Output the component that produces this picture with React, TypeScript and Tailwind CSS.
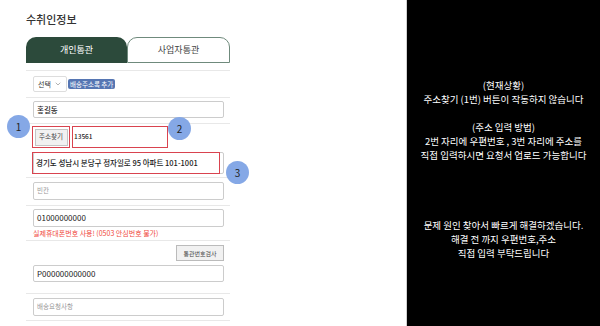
import { ChevronDown } from "lucide-react";

export default function App() {
  return (
    <div className="relative flex h-[326px] w-[600px] overflow-hidden font-['Noto_Sans_CJK_KR',sans-serif]">
      {/* LEFT FORM */}
      <div className="w-[407px] border-r border-[#d0d0d0] bg-white pl-[26px]">
        <div className="w-[204px]">
          <h2 className="h-[37px] pt-[12px] text-[11px] font-medium leading-[14px] text-[#333]">
            수취인정보
          </h2>

          {/* TABS */}
          <div className="flex h-[26px]">
            <div className="flex flex-1 items-center justify-center rounded-t-[10px] bg-[#2c4a3b] text-[9px] text-white">
              개인통관
            </div>
            <div className="flex flex-1 items-center justify-center rounded-t-[10px] border border-[#6f8a7c] bg-white text-[9px] text-[#444]">
              사업자통관
            </div>
          </div>

          <div className="h-[8px] border-b border-[#e8e8e8]" />

          {/* SELECT */}
          <div className="flex h-[27px] items-start gap-[1px] border-b border-[#e8e8e8] pl-[7px] pt-[5px]">
            <div className="flex h-[16px] w-[34px] items-center justify-center gap-[3px] rounded-[2px] border border-[#ddd] text-[7px] text-[#333]">
              선택
              <ChevronDown size={8} strokeWidth={1.5} className="text-[#666]" />
            </div>
            <span className="mt-[3px] rounded-[2px] bg-[#5676b3] px-[2px] text-[6.5px] leading-[10px] text-white">
              배송주소록 추가
            </span>
          </div>

          {/* NAME */}
          <div className="h-[26px] border-b border-[#e8e8e8] pl-[7px] pr-[6px] pt-[3px]">
            <Field value="홍길동" h="h-[17px]" />
          </div>

          {/* ADDRESS */}
          <div className="h-[54px] border-b border-[#e8e8e8] pl-[6px] pr-[6px] pt-[2px]">
            <div className="flex h-[22px] gap-[2px]">
              <div className="flex w-[38px] items-center justify-center border-[1.5px] border-[#d9434f]">
                <div className="flex h-[17px] w-[33px] items-center justify-center border border-[#c4c4c4] bg-[#f1f1f1] text-[6.5px] text-[#444]">
                  주소찾기
                </div>
              </div>
              <div className="flex w-[96px] items-center border-[1.5px] border-[#d9434f] pl-[1px] text-[6.5px] font-medium text-[#222]">
                13561
              </div>
            </div>
            <div className="relative mt-[4px] h-[22px] pl-[1px]">
              <div className="flex h-[22px] items-center rounded-[2px] border border-[#ccc] px-[2px] text-[7.5px] font-medium text-[#222]">
                경기도 성남시 분당구 정자일로 95 아파트 101-1001
              </div>
              <div className="absolute inset-y-0 left-0 right-[4px] border-[1.5px] border-[#d9434f]" />
            </div>
          </div>

          {/* EXTRA */}
          <div className="h-[28px] border-b border-[#e8e8e8] pl-[7px] pr-[6px] pt-[4px]">
            <Field value="빈칸" h="h-[18px]" placeholder />
          </div>

          {/* PHONE */}
          <div className="h-[35px] border-b border-[#e8e8e8] pl-[7px] pr-[6px] pt-[3px]">
            <Field value="01000000000" h="h-[18px]" big />
            <p className="mt-[1px] text-[7px] leading-[10px] text-[#f0483c]">
              실제휴대폰번호 사용! (0503 안심번호 불가)
            </p>
          </div>

          {/* CUSTOMS */}
          <div className="h-[53px] border-b border-[#e8e8e8] pl-[7px] pr-[6px] pt-[4px]">
            <div className="flex justify-end">
              <div className="flex h-[16px] w-[48px] items-center justify-center border border-[#bbb] bg-[#f1f1f1] text-[6px] text-[#444]">
                통관번호검사
              </div>
            </div>
            <div className="mt-[4px]">
              <Field value="P000000000000" h="h-[17px]" big />
            </div>
          </div>

          {/* REQUEST */}
          <div className="h-[27px] border-b border-[#e8e8e8] pl-[7px] pr-[6px] pt-[4px]">
            <Field value="배송요청사항" h="h-[18px]" placeholder />
          </div>
        </div>
      </div>

      {/* RIGHT NOTE */}
      <div className="flex flex-1 flex-col items-center bg-black pt-[78px] text-center text-[9.5px] leading-[14px] text-white">
        <p>(현재상황)</p>
        <p>주소찾기 (1번) 버튼이 작동하지 않습니다</p>
        <p className="mt-[14px]">(주소 입력 방법)</p>
        <p>2번 자리에 우편번호 , 3번 자리에 주소를</p>
        <p>직접 입력하시면 요청서 업로드 가능합니다</p>
        <p className="mt-[56px]">문제 원인 찾아서 빠르게 해결하겠습니다.</p>
        <p>해결 전 까지 우편번호,주소</p>
        <p>직접 입력 부탁드립니다</p>
      </div>

      {/* ANNOTATIONS */}
      <Marker n="1" className="left-[7px] top-[115px]" />
      <Marker n="2" className="left-[168px] top-[117px]" />
      <Marker n="3" className="left-[226px] top-[161px]" />
    </div>
  );
}

function Field({ value, h, placeholder, big }: any) {
  return (
    <div
      className={`flex ${h} items-center rounded-[2px] border border-[#ccc] px-[3px] ${
        placeholder
          ? "text-[6.5px] text-[#999]"
          : big
            ? "text-[8px] text-[#222]"
            : "text-[7.5px] font-medium text-[#222]"
      }`}
    >
      {value}
    </div>
  );
}

function Marker({ n, className }: any) {
  return (
    <div
      className={`absolute flex h-[23px] w-[23px] items-center justify-center rounded-full bg-[#85a8e6] text-[10px] text-[#222] ${className}`}
    >
      {n}
    </div>
  );
}
